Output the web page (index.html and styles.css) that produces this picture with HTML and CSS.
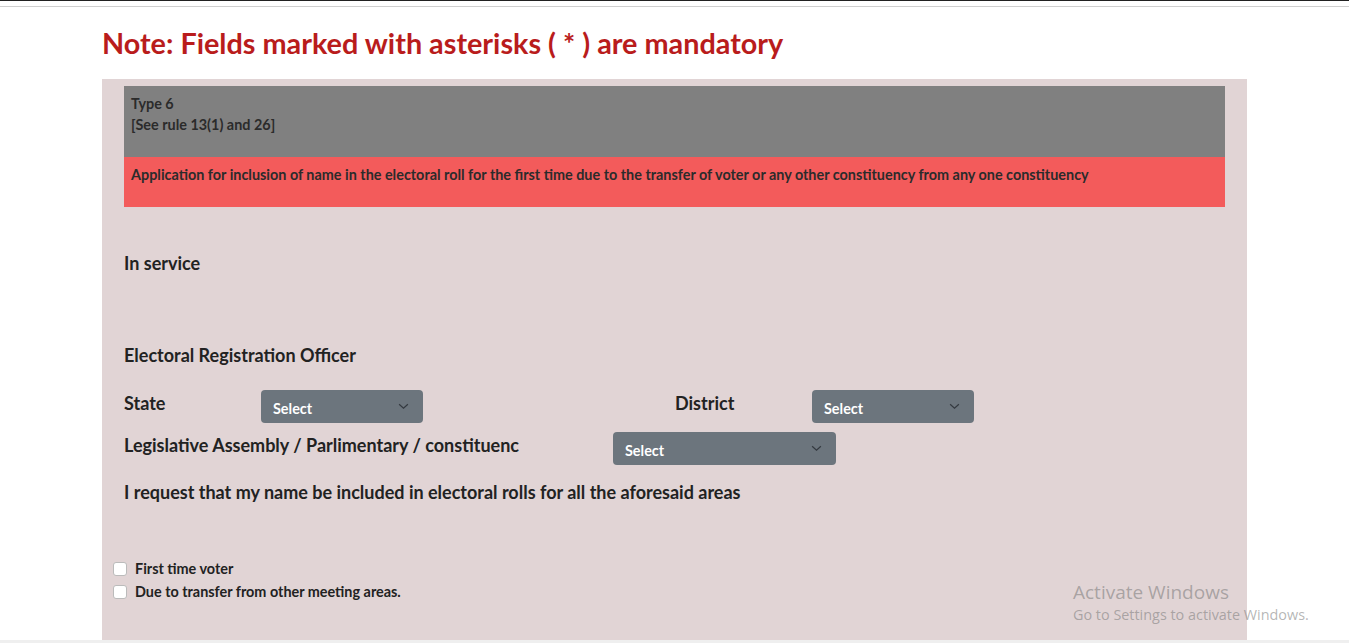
FILE: index.html
```html
<!DOCTYPE html>
<html lang="en">
<head>
<meta charset="utf-8">
<title>Form 6</title>
<link rel="stylesheet" href="styles.css">
</head>
<body>
<div class="topbar"></div>
<div class="topline"></div>
<main class="page">
  <h1 class="note">Note: Fields marked with asterisks ( * ) are mandatory</h1>
  <section class="panel">
    <div class="form-type">
      <div>Type 6</div>
      <div>[See rule 13(1) and 26]</div>
    </div>
    <div class="form-title">Application for inclusion of name in the electoral roll for the first time due to the transfer of voter or any other constituency from any one constituency</div>

    <p class="label in-service">In service</p>
    <p class="label ero">Electoral Registration Officer</p>

    <div class="row-2col">
      <div class="field">
        <span class="label">State</span>
        <div class="select w162"><span>Select</span><svg class="chev" viewBox="0 0 12 8" width="11" height="7"><path d="M1 1.5 L6 6 L11 1.5" fill="none" stroke="#343a40" stroke-width="1.4"/></svg></div>
      </div>
      <div class="field">
        <span class="label">District</span>
        <div class="select w162"><span>Select</span><svg class="chev" viewBox="0 0 12 8" width="11" height="7"><path d="M1 1.5 L6 6 L11 1.5" fill="none" stroke="#343a40" stroke-width="1.4"/></svg></div>
      </div>
    </div>
    <div class="row-lac">
      <span class="label">Legislative Assembly / Parlimentary / constituenc</span>
      <div class="select w223"><span>Select</span><svg class="chev" viewBox="0 0 12 8" width="11" height="7"><path d="M1 1.5 L6 6 L11 1.5" fill="none" stroke="#343a40" stroke-width="1.4"/></svg></div>
    </div>
    <p class="label request">I request that my name be included in electoral rolls for all the aforesaid areas</p>

    <div class="checks">
      <label class="check"><span class="box"></span>First time voter</label>
      <label class="check"><span class="box"></span>Due to transfer from other meeting areas.</label>
    </div>
  </section>
</main>
<div class="bottom-strip"></div>
<div class="watermark">
  <div class="wm-title">Activate Windows</div>
  <div class="wm-sub">Go to Settings to activate Windows.</div>
</div>
</body>
</html>
```
FILE: styles.css
```css
* { box-sizing: border-box; }
html, body { margin: 0; padding: 0; }
body {
  font-family: Lato, "Liberation Sans", sans-serif;
  color: #212529;
  background: #fff;
  height: 643px;
  overflow: hidden;
  position: relative;
}
.topbar { height: 1px; background: #222; }
.topline { height: 1px; background: #cfcfcf; margin-top: 5px; }
.page { padding-left: 102px; width: 1247px; }
.note {
  margin: 0;
  padding-top: 19px;
  height: 72px;
  font-size: 28.8px;
  font-weight: 700;
  line-height: 34px;
  color: #b91c1c;
}
.panel {
  background: #e1d4d5;
  padding: 7px 22px 0 22px;
  height: 561px;
}
.form-type {
  background: #808080;
  color: #2b2b2b;
  font-size: 14.4px;
  font-weight: 700;
  line-height: 21px;
  padding: 7px 7px 22px;
  height: 71px;
}
.form-title {
  background: #f35b5b;
  color: #2b2b2b;
  font-size: 14.4px;
  font-weight: 700;
  line-height: 21px;
  padding: 7px 7px 22px;
  height: 50px;
}
.label {
  font-size: 18px;
  font-weight: 700;
  color: #222;
  line-height: 24px;
  margin: 0;
}
.in-service { margin-top: 44px; }
.ero { margin-top: 68px; }
.row-2col {
  display: grid;
  grid-template-columns: 551px 551px;
  margin-top: 23px;
}
.field {
  display: grid;
  grid-template-columns: 137px auto;
  align-items: start;
}
.field .label { padding-top: 1px; }
.select {
  background: #6c757d;
  border-radius: 4px;
  height: 33px;
  display: flex;
  align-items: center;
  justify-content: space-between;
  padding: 3px 14px 0 12px;
  color: #fff;
  font-size: 14.4px;
  font-weight: 700;
}
.chev { margin-top: -3px; }
.w162 { width: 162px; }
.w223 { width: 223px; }
.row-lac {
  display: grid;
  grid-template-columns: 489px auto;
  margin-top: 9px;
  align-items: start;
}
.row-lac .label { padding-top: 1px; }
.request { margin-top: 15px; }
.checks {
  margin-left: -11px;
  margin-top: 57px;
  display: flex;
  flex-direction: column;
  gap: 7px;
}
.check {
  display: flex;
  align-items: center;
  font-size: 14.4px;
  font-weight: 700;
  color: #222;
  line-height: 16px;
}
.box {
  width: 14px;
  height: 14px;
  background: #fff;
  border: 1px solid #bbb;
  border-radius: 3px;
  margin-right: 8px;
}
.bottom-strip {
  height: 3px;
  background: #efefef;
  position: absolute;
  left: 0; right: 0; bottom: 0;
}
.watermark {
  position: absolute;
  left: 1073px;
  top: 579px;
  font-family: "Open Sans", "Noto Sans", sans-serif;
  color: rgba(120, 120, 120, 0.55);
  pointer-events: none;
}
.wm-title { font-size: 19px; line-height: 26px; }
.wm-sub { font-size: 14.4px; line-height: 20px; }
```
